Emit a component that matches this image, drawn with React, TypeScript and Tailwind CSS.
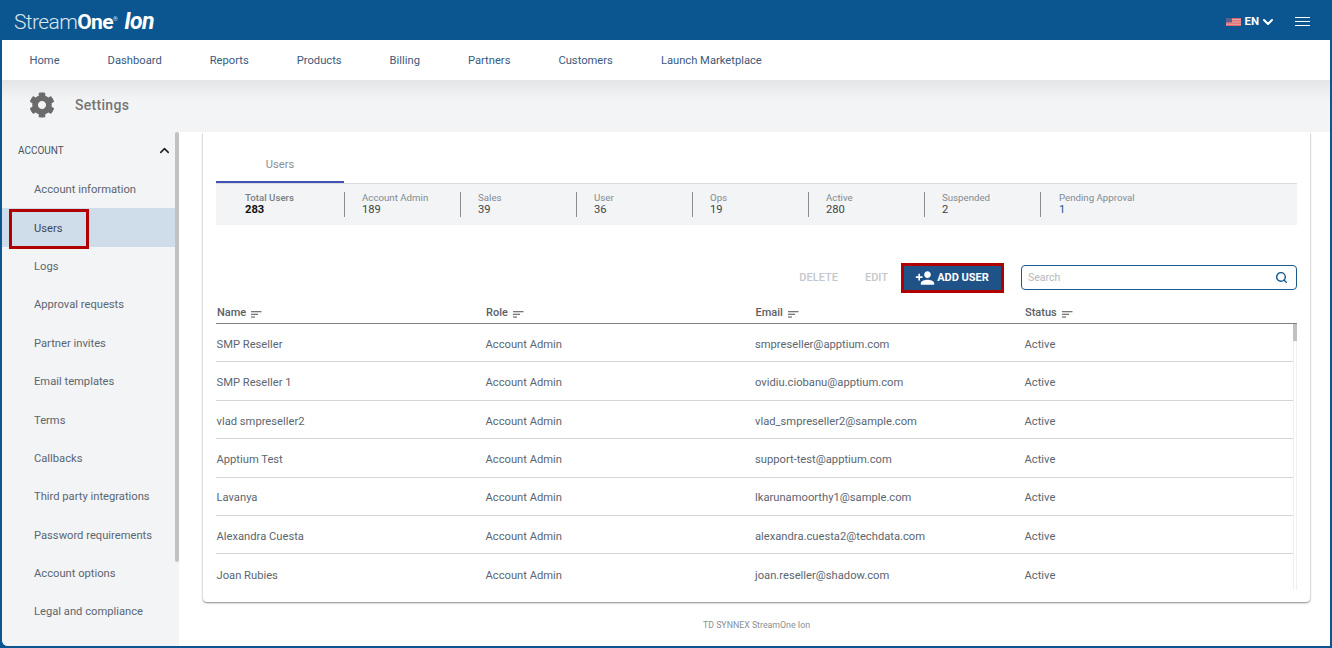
import { FaCog } from "react-icons/fa";
import { MdPersonAdd } from "react-icons/md";
import { ChevronUp, ChevronDown, Search } from "lucide-react";

const nav = ["Home", "Dashboard", "Reports", "Products", "Billing", "Partners", "Customers", "Launch Marketplace"];
const side = ["Account information", "Users", "Logs", "Approval requests", "Partner invites", "Email templates", "Terms", "Callbacks", "Third party integrations", "Password requirements", "Account options", "Legal and compliance"];
const stats = [
  ["Account Admin", "189"],
  ["Sales", "39"],
  ["User", "36"],
  ["Ops", "19"],
  ["Active", "280"],
  ["Suspended", "2"],
];
const rows = [
  ["SMP Reseller", "smpreseller@apptium.com"],
  ["SMP Reseller 1", "ovidiu.ciobanu@apptium.com"],
  ["vlad smpreseller2", "vlad_smpreseller2@sample.com"],
  ["Apptium Test", "support-test@apptium.com"],
  ["Lavanya", "lkarunamoorthy1@sample.com"],
  ["Alexandra Cuesta", "alexandra.cuesta2@techdata.com"],
  ["Joan Rubies", "joan.reseller@shadow.com"],
];

function SortIcon() {
  return (
    <svg width="11" height="7" viewBox="0 0 11 7" className="ml-[5px] mt-[5px] inline-block" fill="#777">
      <rect x="0" y="0" width="10.5" height="1.3" />
      <rect x="0" y="2.7" width="7" height="1.3" />
      <rect x="0" y="5.4" width="4" height="1.3" />
    </svg>
  );
}

function Flag() {
  return (
    <svg width="15" height="8" viewBox="0 0 15 8">
      <rect width="15" height="8" fill="#e8a0a0" />
      <rect y="0" width="15" height="1" fill="#d9686c" />
      <rect y="2.3" width="15" height="1" fill="#d9686c" />
      <rect y="4.6" width="15" height="1" fill="#d9686c" />
      <rect y="6.9" width="15" height="1.1" fill="#d9686c" />
      <rect width="6" height="4.4" fill="#5a5f8c" />
    </svg>
  );
}

export default function App() {
  return (
    <div className="flex h-[648px] w-[1332px] flex-col overflow-hidden bg-[#0b5690] pb-[2px] pl-[2px] pr-[2px] font-['Roboto',sans-serif] text-[11.2px] text-[#5c6670]">
      <header className="flex h-[40px] shrink-0 items-center justify-between pl-[12px] pr-[20px] pt-[3px] text-white">
        <div className="flex items-baseline text-[21px] leading-none tracking-[-0.6px] text-[#dce6ee]">
          <span className="font-light">Stream</span>
          <span className="font-bold text-white">One</span>
          <span className="relative -top-[8px] text-[6px]">®</span>
          <span className="ml-[7px] text-[23px] font-bold italic text-white">Ion</span>
        </div>
        <div className="flex items-center">
          <Flag />
          <span className="ml-[3px] text-[11.5px] font-bold">EN</span>
          <ChevronDown size={16} strokeWidth={3} className="ml-[1px]" />
          <div className="mb-[1px] ml-[19px] flex w-[15px] flex-col gap-[3px]">
            <div className="h-[1px] bg-white" />
            <div className="h-[1px] bg-white" />
            <div className="h-[1px] bg-white" />
          </div>
        </div>
      </header>

      <nav className="flex h-[40px] shrink-0 items-center gap-[48px] bg-white pl-[27.5px] pt-[2px] text-[#3c5a7c]">
        {nav.map((n) => (
          <span key={n}>{n}</span>
        ))}
      </nav>

      <div className="flex h-[52px] shrink-0 items-center bg-gradient-to-b from-[#e4e5e7] to-[#f3f4f6] to-40% pb-[2px] pl-[27px] text-[#6b6b6b]">
        <FaCog size={26} />
        <span className="ml-[20px] text-[14px] font-medium tracking-[0.3px] text-[#757575]">Settings</span>
      </div>

      <div className="flex min-h-0 flex-1 overflow-hidden rounded-bl-md bg-white">
        <aside className="relative w-[173px] shrink-0 bg-[#f3f4f6]">
          <div className="flex h-[38px] items-center justify-between pb-[2px] pl-[16px] pr-[3px] text-[10px] text-[#4a5560]">
            <span>ACCOUNT</span>
            <ChevronUp size={15} strokeWidth={2.5} className="text-[#222]" />
          </div>
          <ul>
            {side.map((s) => (
              <li
                key={s}
                className={`relative flex h-[38.4px] items-center pl-[32px] pt-[2.8px] ${s === "Users" ? "bg-[#cfdcea] text-[#3e4a56]" : ""}`}
              >
                {s === "Users" && (
                  <span className="absolute left-[7px] top-px h-[40px] w-[80px] border-[3px] border-[#b00000]" />
                )}
                {s}
              </li>
            ))}
          </ul>
        </aside>
        <div className="relative w-[4px] shrink-0 bg-[#f3f4f6]">
          <div className="h-[430px] w-[4px] rounded-sm bg-[#c1c1c1]" />
        </div>

        <main className="flex min-w-0 flex-1 flex-col pl-[24px] pr-[20px]">
          <section className="flex h-[470px] shrink-0 flex-col rounded-b-[4px] bg-white px-[13px] shadow-[0_1px_2px_rgba(0,0,0,0.45),0_0_2px_rgba(0,0,0,0.08)]">
            <div className="flex h-[52px] shrink-0 items-end border-b border-[#d9dce0]">
              <div className="flex h-[40px] w-[128px] items-center justify-center border-b-2 border-[#3f51b5] pt-[6px] text-[#8a8f94]">
                Users
              </div>
            </div>
            <div className="flex h-[41px] shrink-0 items-center bg-[#f2f4f6] text-[9.7px] leading-[12px]">
              <div className="flex h-[25px] w-[129px] flex-col justify-center border-r border-[#8c8c8c] pb-[1px] pl-[29px]">
                <span className="font-medium text-[#7a7f85]">Total Users</span>
                <span className="text-[11.2px] font-bold text-[#111]">283</span>
              </div>
              {stats.map(([l, v]) => (
                <div key={l} className="flex h-[25px] w-[116px] flex-col justify-center border-r border-[#8c8c8c] pb-[1px] pl-[17px]">
                  <span className="text-[#858a90]">{l}</span>
                  <span className="text-[11.2px] text-[#444]">{v}</span>
                </div>
              ))}
              <div className="flex h-[25px] flex-col justify-center pb-[1px] pl-[18px]">
                <span className="text-[#858a90]">Pending Approval</span>
                <span className="text-[11.2px] text-[#1c5a8c]">1</span>
              </div>
            </div>

            <div className="mt-[38px] flex h-[30px] shrink-0 items-center justify-end">
              <span className="text-[11px] font-medium text-[#c4c8cc]">DELETE</span>
              <span className="ml-[27px] text-[11px] font-medium text-[#c4c8cc]">EDIT</span>
              <button className="ml-[13px] flex h-[30px] w-[103px] items-center justify-center border-[3px] border-[#b00000] bg-[#1f5287] pr-[1px] text-[11px] font-bold text-white">
                <MdPersonAdd size={20} className="mr-[2px]" />
                ADD USER
              </button>
              <div className="mb-[1px] ml-[17px] flex h-[25px] w-[276px] items-center justify-between rounded-[4px] border border-[#1c5a8c] pl-[6px] pr-[8px]">
                <span className="text-[10.5px] text-[#b5b8bc]">Search</span>
                <Search size={13} strokeWidth={2.6} className="text-[#0b5690]" />
              </div>
            </div>

            <div className="mt-[13px] grid h-[18px] shrink-0 grid-cols-[269px_269.5px_269.5px_1fr] border-b border-[#808080] pl-[1px] text-[11px] font-medium leading-[13px] text-[#5a5f66]">
              {["Name", "Role", "Email", "Status"].map((h) => (
                <div key={h} className="flex items-start">
                  {h}
                  <SortIcon />
                </div>
              ))}
            </div>

            <div className="flex min-h-0 flex-1">
              <div className="min-w-0 flex-1 overflow-hidden">
                {rows.map(([name, email]) => (
                  <div
                    key={name}
                    className="grid h-[38.4px] grid-cols-[269px_269.5px_269.5px_1fr] items-center border-b border-[#d4d6d8] pl-[0.5px] pt-[5px] last:border-b-0"
                  >
                    <span>{name}</span>
                    <span>Account Admin</span>
                    <span>{email}</span>
                    <span>Active</span>
                  </div>
                ))}
              </div>
              <div className="mb-[12px] w-[4px] shrink-0 border-x border-[#f0f0f0]">
                <div className="-mx-px h-[17px] bg-[#c1c1c1]" />
              </div>
            </div>
          </section>
          <footer className="mt-[17px] text-center text-[8.8px] text-[#8a8f94]">TD SYNNEX StreamOne Ion</footer>
        </main>
      </div>
    </div>
  );
}
